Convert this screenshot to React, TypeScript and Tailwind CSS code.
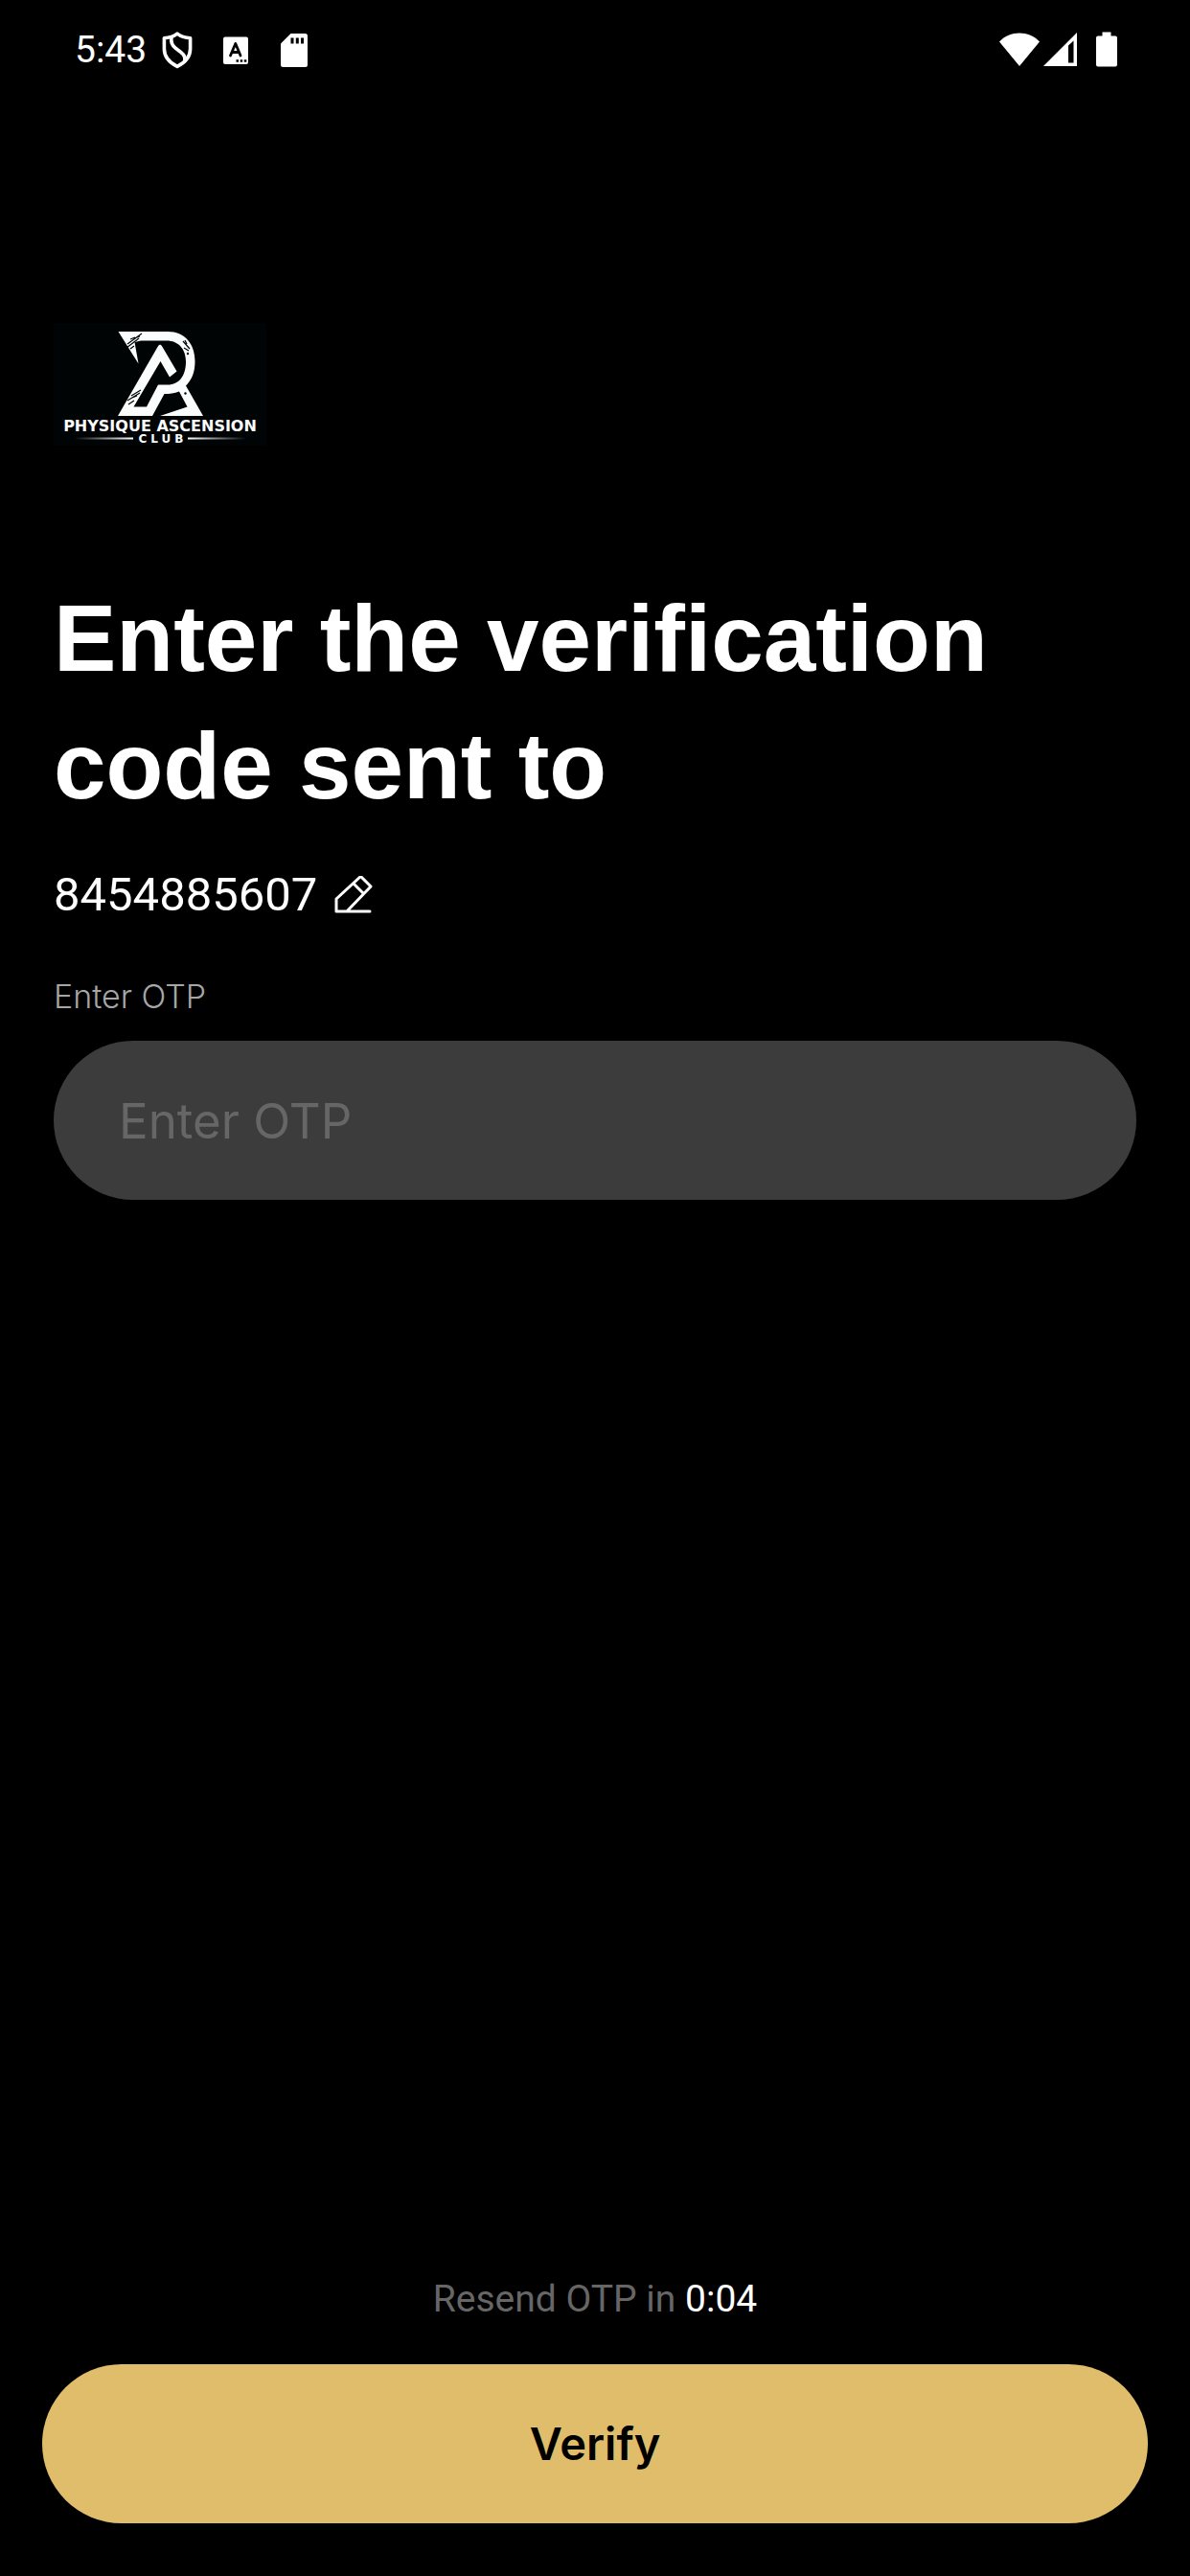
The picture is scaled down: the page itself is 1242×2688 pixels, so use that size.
import React, { useState } from 'react';

const ShieldIcon = () => (
    <svg viewBox="0 0 32 40" className="w-8 h-10" fill="none" stroke="currentColor" strokeWidth="3.6" strokeLinejoin="round">
        <path d="M16 3.2C12.5 6 7.5 7.6 2.4 7.8V19c0 8.5 6 14.6 13.6 18.4C23.6 33.6 29.6 27.5 29.6 19V7.8C24.5 7.6 19.5 6 16 3.2Z" />
        <path d="M10 7C9 12.5 10.5 15.5 14.5 18.5C20 22.5 25 25 24 31.5" />
    </svg>
);

const LetterBoxIcon = () => (
    <svg viewBox="0 0 26 40" className="w-[26px] h-10">
        <rect x="0" y="6.5" width="26" height="28.5" rx="2" fill="currentColor" />
        <path d="M7.5 26L12.8 13.5L18 26M9.5 22.5H16" fill="none" stroke="#000" strokeWidth="2.8" strokeLinejoin="round" strokeLinecap="round" />
        <path d="M13.5 30.2h2.5v2.5h-2.5zM17.7 30.2h2.5v2.5h-2.5zM21.8 30.2h2.5v2.5h-2.5z" fill="#000" />
    </svg>
);

const SdCardIcon = () => (
    <svg viewBox="0 0 28 40" className="w-7 h-10">
        <path d="M10.5 3H25.5Q28 3 28 5.5V35.5Q28 38 25.5 38H2.5Q0 38 0 35.5V13.5Z" fill="currentColor" />
        <path d="M10.5 7.5h3v6h-3zM15.8 7.5h3v6h-3zM21 7.5h3v6h-3z" fill="#000" />
    </svg>
);

const WifiIcon = () => (
    <svg viewBox="0 0 42 40" className="w-[42px] h-10" fill="currentColor">
        <path d="M0 11.5C11 -0.5 31 -0.5 42 11.5L21 37Z" />
    </svg>
);

const SignalIcon = () => (
    <svg viewBox="0 0 35 40" className="w-[35px] h-10">
        <path d="M35 2V37H0Z" fill="currentColor" />
        <path d="M26 15.5L31.5 10.5V33.5H26Z" fill="#000" />
    </svg>
);

const BatteryIcon = () => (
    <svg viewBox="0 0 22 40" className="w-[22px] h-10" fill="currentColor">
        <path d="M6.5 1.5H15.5V5.5H20Q22 5.5 22 7.5V35.5Q22 37.5 20 37.5H2Q0 37.5 0 35.5V7.5Q0 5.5 2 5.5H6.5Z" />
    </svg>
);

const EditIcon = () => (
    <svg viewBox="0 0 40 40" className="w-10 h-10" fill="none" stroke="currentColor" strokeWidth="3" strokeLinejoin="round" strokeLinecap="round">
        <path d="M37 37H2V24L27.5 0.5L38 11L13 37M20.5 8.5L30.5 18.5" />
    </svg>
);

const Logo = () => (
    <svg viewBox="0 0 222 128" className="w-[222px] h-32 block" role="img" aria-label="Physique Ascension Club">
        <defs>
            <linearGradient id="ruleLeft">
                <stop offset="0" stopColor="#fff" stopOpacity="0" />
                <stop offset="1" stopColor="#fff" />
            </linearGradient>
            <linearGradient id="ruleRight">
                <stop offset="0" stopColor="#fff" />
                <stop offset="1" stopColor="#fff" stopOpacity="0" />
            </linearGradient>
        </defs>
        <rect width="222" height="128" fill="#010405" />
        {/* R bowl and the two legs of the A */}
        <path d="M67.5 9H119C137 9 147.5 22 147.5 40C147.5 51 144.5 59 138 65.5L156 97H111L139.5 87.5L131 71.5C126 73.5 121 74 115.500 74L103 97H67L108.5 25Q111 20 113.5 25L128.5 50.5L121 56.5L111.5 40L83.5 87.5H97L109 64.5H119C131 64.5 138 55 138 40.5C138 27 130 18.5 118 18.5H91L84.5 20L88.5 42.5Z" fill="#fbfdfd" />
        {/* scratches */}
        <g stroke="#010405" strokeWidth="1.2" fill="none">
            <path d="M77 22L92 11M76 26L89 16M80 17L85 15M84 16L90 14M80 27L84 24M135 19L142 27M137 18L139 22M136 26L141 29M77 81L90 73M81 76L91 70M82 78L87 76M78 85L84 81" />
        </g>
        <circle cx="137.5" cy="73.5" r="1.2" fill="#010405" />
        <circle cx="140" cy="32" r="1.2" fill="#010405" />
        <text x="111" y="113" textAnchor="middle" fill="#fbfdfd" className="font-['DejaVu_Sans'] font-bold text-[16px]">
            PHYSIQUE ASCENSION
        </text>
        <rect x="22" y="119.5" width="61" height="2" fill="url(#ruleLeft)" />
        <text x="114" y="125" textAnchor="middle" fill="#fbfdfd" className="font-['DejaVu_Sans'] font-bold text-[12px] tracking-[4px]">
            CLUB
        </text>
        <rect x="140" y="119.5" width="61" height="2" fill="url(#ruleRight)" />
    </svg>
);

const StatusBar = () => (
    <div className="flex items-center justify-between h-[104px] pl-[78px] pr-[76px]">
        <div className="flex items-center">
            <span className="text-[39px] leading-10 mr-4">5:43</span>
            <ShieldIcon />
            <div className="flex items-center gap-[34px] ml-8">
                <LetterBoxIcon />
                <SdCardIcon />
            </div>
        </div>
        <div className="flex items-center">
            <WifiIcon />
            <div className="flex items-center gap-5 ml-1">
                <SignalIcon />
                <BatteryIcon />
            </div>
        </div>
    </div>
);

export default function App() {
    const [otp, setOtp] = useState('');
    const phone = '8454885607';

    return (
        <div className="min-h-screen flex flex-col bg-black text-white font-[Roboto,sans-serif]">
            <StatusBar />

            <main className="flex-1 flex flex-col px-14 pt-[233px]">
                <Logo />

                <h1 className="mt-[135px] max-w-[1100px] font-['Liberation_Sans',sans-serif] font-bold text-[98px] leading-[133px]">
                    Enter the verification<br />code sent to
                </h1>

                <div className="flex items-center gap-[18px] mt-9">
                    <span className="text-[49px] leading-[64px]">{phone}</span>
                    <button type="button" aria-label="Edit phone number">
                        <EditIcon />
                    </button>
                </div>

                <label htmlFor="otp" className="mt-[54px] font-[Inter,sans-serif] font-light text-[34px] leading-10 text-[#a6a6a6]">
                    Enter OTP
                </label>
                <input
                    id="otp"
                    type="text"
                    inputMode="numeric"
                    value={otp}
                    onChange={e => setOtp(e.target.value)}
                    placeholder="Enter OTP"
                    className="mt-[26px] w-full h-[166px] rounded-full bg-[#3c3c3c] px-[68px] font-[Inter,sans-serif] text-[51px] text-white placeholder:text-[#666666] outline-none"
                />
            </main>

            {/* Footer */}
            <footer className="px-11 pb-[55px]">
                <p className="text-center text-[39px] leading-[48px] text-[#666666]">
                    Resend OTP in <span className="text-white">0:04</span>
                </p>
                <button type="button" className="mt-11 w-full h-[166px] rounded-full bg-[#e0bd6a] font-[Inter,sans-serif] font-semibold text-[47px] text-black">
                    Verify
                </button>
            </footer>
        </div>
    );
}
